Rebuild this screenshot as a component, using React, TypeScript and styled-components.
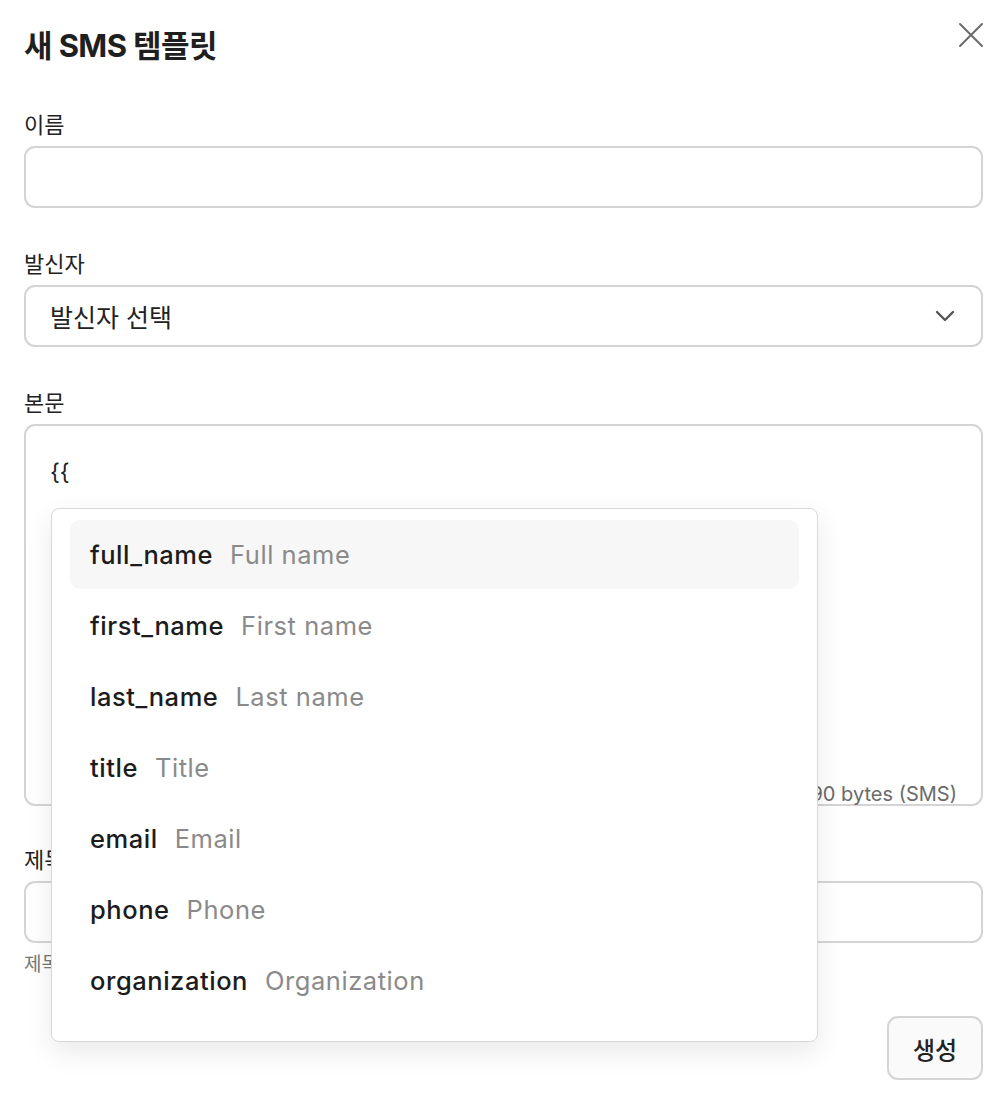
import styled, { createGlobalStyle } from "styled-components";

const GlobalStyle = createGlobalStyle`
  * { box-sizing: border-box; }
  body {
    margin: 0;
    background: #fff;
    font-family: Inter, "Noto Sans CJK KR", sans-serif;
    color: #1f1f1f;
  }
`;

const Modal = styled.div`
  width: 1004px;
  padding: 27px 21px 14px 24px;
`;

const Header = styled.div`
  display: flex;
  justify-content: space-between;
  align-items: flex-start;
  margin-bottom: 46px;
`;

const Title = styled.h1`
  margin: 0;
  font-size: 31px;
  line-height: 38px;
  font-weight: 700;
  letter-spacing: -0.6px;
`;

const CloseButton = styled.button`
  border: 0;
  background: none;
  padding: 0;
  margin: -6px -2px 0 0;
  width: 28px;
  height: 28px;
  display: flex;
  align-items: center;
  justify-content: center;
  color: #6b6b6b;
  cursor: pointer;
`;

const Field = styled.div<{ $gap?: number }>`
  display: flex;
  flex-direction: column;
  margin-bottom: ${(p) => p.$gap ?? 42}px;
`;

const Label = styled.label`
  font-size: 22px;
  line-height: 28px;
  font-weight: 400;
  color: #222;
  margin-bottom: 7px;
`;

const Input = styled.div`
  height: 62px;
  border: 2px solid #d4d4d4;
  border-radius: 11px;
  background: #fff;
`;

const Select = styled.div`
  height: 62px;
  border: 2px solid #d4d4d4;
  border-radius: 11px;
  display: flex;
  align-items: center;
  justify-content: space-between;
  padding: 0 26px 0 24px;
  font-size: 25px;
  color: #222;
`;

const TextAreaWrap = styled.div`
  position: relative;
  height: 382px;
  border: 2px solid #d4d4d4;
  border-radius: 11px;
  padding: 30px 24px;
  font-size: 23px;
  line-height: 32px;
  color: #222;
`;

const Counter = styled.span`
  position: absolute;
  right: 24px;
  bottom: -4px;
  font-size: 20px;
  line-height: 28px;
  color: #6a6a6a;
`;

const Menu = styled.ul`
  position: absolute;
  left: 25px;
  top: 82px;
  width: 767px;
  margin: 0;
  padding: 11px 18px 24px;
  list-style: none;
  background: #fff;
  border: 1.5px solid #d9d9d9;
  border-radius: 8px;
  box-shadow: 0 10px 28px rgba(0, 0, 0, 0.09);
  z-index: 2;
`;

const MenuItem = styled.li<{ $active?: boolean }>`
  display: flex;
  align-items: center;
  gap: 17px;
  height: 69px;
  margin-bottom: 2px;
  padding: 0 20px;
  border-radius: 10px;
  background: ${(p) => (p.$active ? "#f7f7f7" : "transparent")};
  font-size: 25.5px;
  letter-spacing: 0.55px;
`;

const Key = styled.span`
  font-weight: 500;
  color: #1c1c1c;
`;

const Desc = styled.span`
  color: #8a8a8a;
`;

const Hint = styled.div`
  margin-top: 10px;
  font-size: 19px;
  line-height: 24px;
  color: #777;
`;

const Footer = styled.div`
  display: flex;
  justify-content: flex-end;
  margin-top: 39px;
`;

const CreateButton = styled.button`
  width: 96px;
  height: 64px;
  border: 2px solid #d4d4d4;
  border-radius: 11px;
  background: #fafafa;
  font-family: inherit;
  font-size: 24px;
  font-weight: 500;
  color: #222;
`;

const variables = [
  ["full_name", "Full name"],
  ["first_name", "First name"],
  ["last_name", "Last name"],
  ["title", "Title"],
  ["email", "Email"],
  ["phone", "Phone"],
  ["organization", "Organization"],
];

export default function App() {
  return (
    <>
      <GlobalStyle />
      <Modal>
        <Header>
          <Title>새 SMS 템플릿</Title>
          <CloseButton aria-label="닫기">
            <svg width="26" height="26" viewBox="0 0 26 26" fill="none" stroke="currentColor" strokeWidth="2" strokeLinecap="round">
              <path d="M2 2L24 24M24 2L2 24" />
            </svg>
          </CloseButton>
        </Header>

        <Field>
          <Label>이름</Label>
          <Input />
        </Field>

        <Field>
          <Label>발신자</Label>
          <Select>
            <span>발신자 선택</span>
            <svg width="20" height="12" viewBox="0 0 20 12" fill="none" stroke="#555" strokeWidth="2.4" strokeLinecap="round" strokeLinejoin="round">
              <path d="M2 2L10 10L18 2" />
            </svg>
          </Select>
        </Field>

        <Field $gap={40}>
          <Label>본문</Label>
          <TextAreaWrap>
            {"{{"}
            <Menu>
              {variables.map(([key, desc], i) => (
                <MenuItem key={key} $active={i === 0}>
                  <Key>{key}</Key>
                  <Desc>{desc}</Desc>
                </MenuItem>
              ))}
            </Menu>
            <Counter>2 / 90 bytes (SMS)</Counter>
          </TextAreaWrap>
        </Field>

        <Field $gap={0}>
          <Label>제목</Label>
          <Input />
          <Hint>제목은 MMS 전송 시 사용</Hint>
        </Field>

        <Footer>
          <CreateButton>생성</CreateButton>
        </Footer>
      </Modal>
    </>
  );
}
